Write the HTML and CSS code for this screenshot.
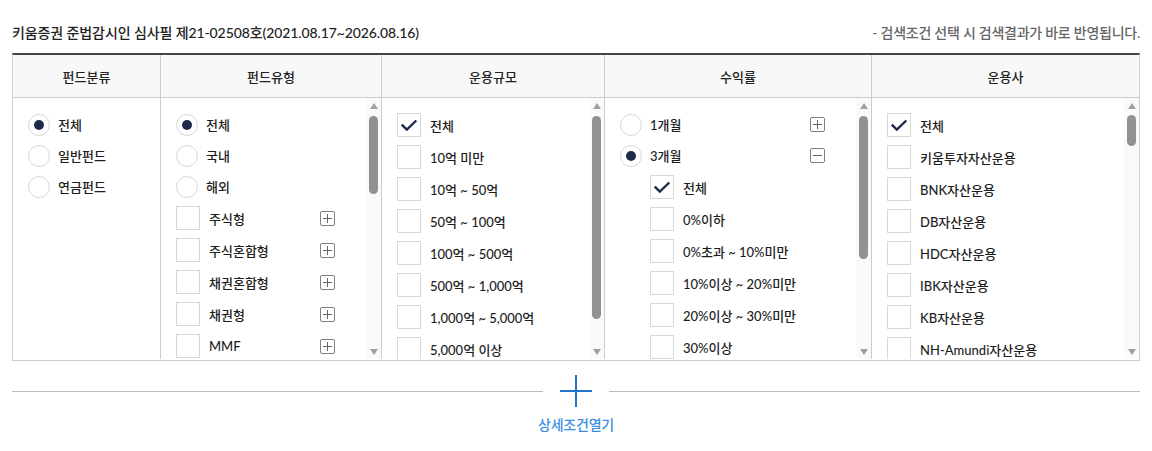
FILE: index.html
```html
<!DOCTYPE html>
<html lang="ko">
<head>
<meta charset="utf-8">
<title>펀드검색</title>
<link rel="stylesheet" href="styles.css">
</head>
<body>
<div class="page">
  <div class="topline">
    <span class="title">키움증권 준법감시인 심사필 제21-02508호(2021.08.17~2026.08.16)</span>
    <span class="note">- 검색조건 선택 시 검색결과가 바로 반영됩니다.</span>
  </div>

  <div class="filter">
    <div class="head">펀드분류</div>
    <div class="head">펀드유형</div>
    <div class="head">운용규모</div>
    <div class="head">수익률</div>
    <div class="head">운용사</div>

    <!-- 펀드분류 -->
    <div class="cell">
      <ul class="list">
        <li class="item radio-item"><span class="radio on"></span><span class="label">전체</span></li>
        <li class="item radio-item"><span class="radio"></span><span class="label">일반펀드</span></li>
        <li class="item radio-item"><span class="radio"></span><span class="label">연금펀드</span></li>
      </ul>
    </div>

    <!-- 펀드유형 -->
    <div class="cell">
      <ul class="list">
        <li class="item radio-item"><span class="radio on"></span><span class="label">전체</span></li>
        <li class="item radio-item"><span class="radio"></span><span class="label">국내</span></li>
        <li class="item radio-item"><span class="radio"></span><span class="label">해외</span></li>
        <li class="item check-item"><span class="check"></span><span class="label">주식형</span><span class="toggle plus"></span></li>
        <li class="item check-item"><span class="check"></span><span class="label">주식혼합형</span><span class="toggle plus"></span></li>
        <li class="item check-item"><span class="check"></span><span class="label">채권혼합형</span><span class="toggle plus"></span></li>
        <li class="item check-item"><span class="check"></span><span class="label">채권형</span><span class="toggle plus"></span></li>
        <li class="item check-item"><span class="check"></span><span class="label">MMF</span><span class="toggle plus"></span></li>
      </ul>
      <div class="scrollbar"><span class="arrow up"></span><span class="thumb t2"></span><span class="arrow down"></span></div>
    </div>

    <!-- 운용규모 -->
    <div class="cell">
      <ul class="list">
        <li class="item check-item"><span class="check on"><svg viewBox="0 0 24 24"><path d="M5 12.5 L9.6 17 L19 8"/></svg></span><span class="label">전체</span></li>
        <li class="item check-item"><span class="check"></span><span class="label">10억 미만</span></li>
        <li class="item check-item"><span class="check"></span><span class="label">10억 ~ 50억</span></li>
        <li class="item check-item"><span class="check"></span><span class="label">50억 ~ 100억</span></li>
        <li class="item check-item"><span class="check"></span><span class="label">100억 ~ 500억</span></li>
        <li class="item check-item"><span class="check"></span><span class="label">500억 ~ 1,000억</span></li>
        <li class="item check-item"><span class="check"></span><span class="label">1,000억 ~ 5,000억</span></li>
        <li class="item check-item"><span class="check"></span><span class="label">5,000억 이상</span></li>
      </ul>
      <div class="scrollbar"><span class="arrow up"></span><span class="thumb t3"></span><span class="arrow down"></span></div>
    </div>

    <!-- 수익률 -->
    <div class="cell">
      <ul class="list">
        <li class="item radio-item"><span class="radio"></span><span class="label">1개월</span><span class="toggle plus"></span></li>
        <li class="item radio-item"><span class="radio on"></span><span class="label">3개월</span><span class="toggle minus"></span></li>
        <li class="item check-item sub"><span class="check on"><svg viewBox="0 0 24 24"><path d="M5 12.5 L9.6 17 L19 8"/></svg></span><span class="label">전체</span></li>
        <li class="item check-item sub"><span class="check"></span><span class="label">0%이하</span></li>
        <li class="item check-item sub"><span class="check"></span><span class="label">0%초과 ~ 10%미만</span></li>
        <li class="item check-item sub"><span class="check"></span><span class="label">10%이상 ~ 20%미만</span></li>
        <li class="item check-item sub"><span class="check"></span><span class="label">20%이상 ~ 30%미만</span></li>
        <li class="item check-item sub"><span class="check"></span><span class="label">30%이상</span></li>
      </ul>
      <div class="scrollbar"><span class="arrow up"></span><span class="thumb t4"></span><span class="arrow down"></span></div>
    </div>

    <!-- 운용사 -->
    <div class="cell">
      <ul class="list">
        <li class="item check-item"><span class="check on"><svg viewBox="0 0 24 24"><path d="M5 12.5 L9.6 17 L19 8"/></svg></span><span class="label">전체</span></li>
        <li class="item check-item"><span class="check"></span><span class="label">키움투자자산운용</span></li>
        <li class="item check-item"><span class="check"></span><span class="label">BNK자산운용</span></li>
        <li class="item check-item"><span class="check"></span><span class="label">DB자산운용</span></li>
        <li class="item check-item"><span class="check"></span><span class="label">HDC자산운용</span></li>
        <li class="item check-item"><span class="check"></span><span class="label">IBK자산운용</span></li>
        <li class="item check-item"><span class="check"></span><span class="label">KB자산운용</span></li>
        <li class="item check-item"><span class="check"></span><span class="label">NH-Amundi자산운용</span></li>
      </ul>
      <div class="scrollbar"><span class="arrow up"></span><span class="thumb t5"></span><span class="arrow down"></span></div>
    </div>
  </div>

  <div class="more">
    <div class="more-line">
      <span class="rule"></span>
      <svg class="more-icon" viewBox="0 0 32 32"><path d="M16 0 V32 M0 16 H32"/></svg>
      <span class="rule"></span>
    </div>
    <div class="more-text">상세조건열기</div>
  </div>
</div>
</body>
</html>
```

FILE: styles.css
```css
* { box-sizing: border-box; }
html, body { margin: 0; padding: 0; background: #fff; }
body {
  font-family: "Lato", "Noto Sans CJK KR", sans-serif;
  color: #222;
  font-size: 13px;
  font-weight: 500;
}
.page { padding: 0 12px; }

.topline {
  display: flex;
  justify-content: space-between;
  align-items: center;
  height: 20px;
  margin-top: 22px;
  margin-bottom: 11px;
}
.title { font-size: 14px; letter-spacing: -0.1px; color: #222; }
.note { font-size: 14px; letter-spacing: -0.25px; color: #666; }

.filter {
  display: grid;
  grid-template-columns: 147px 221px 223px 267px 1fr;
  grid-template-rows: 43px 262px;
  border-top: 2px solid #444;
  border-left: 1px solid #ccc;
  border-right: 1px solid #ccc;
  border-bottom: 1px solid #ccc;
}
.head {
  display: flex;
  align-items: center;
  justify-content: center;
  background: #f8f8f8;
  border-bottom: 1px solid #ccc;
  font-size: 13px;
  color: #222;
}
.head + .head, .cell + .cell { border-left: 1px solid #ccc; }
.cell {
  display: flex;
  overflow: hidden;
  height: 261px;
}
.list {
  list-style: none;
  margin: 0;
  padding: 11px 31px 0 15px;
  flex: 1;
  min-width: 0;
}
.item {
  display: flex;
  align-items: center;
  white-space: nowrap;
}
.radio-item { height: 31px; }
.check-item { height: 32px; }
.item.sub { padding-left: 30px; }
.label { margin-left: 9px; flex: 1; color: #1e1e1e; }
.radio-item .label { margin-left: 8px; }

.radio {
  width: 22px; height: 22px;
  border: 1px solid #d8d8d8;
  border-radius: 50%;
  display: flex; align-items: center; justify-content: center;
  flex: none;
  background: #fff;
}
.radio.on::after {
  content: "";
  width: 10px; height: 10px;
  border-radius: 50%;
  background: #1b2b49;
}
.check {
  width: 24px; height: 24px;
  border: 1px solid #d8d8d8;
  flex: none;
  background: #fff;
  display: flex;
}
.check svg { width: 22px; height: 22px; }
.check svg path { fill: none; stroke: #1b2b49; stroke-width: 2.6; stroke-linecap: square; stroke-linejoin: miter; }

.toggle {
  width: 15px; height: 15px;
  border: 1px solid #808080;
  border-radius: 2px;
  position: relative;
  flex: none;
}
.toggle::before {
  content: "";
  position: absolute;
  left: 2px; right: 2px; top: 6px;
  height: 1px;
  background: #666;
}
.plus::after {
  content: "";
  position: absolute;
  top: 2px; bottom: 2px; left: 6px;
  width: 1px;
  background: #666;
}

.scrollbar {
  width: 15px;
  flex: none;
  background: #fafafa;
  display: flex;
  flex-direction: column;
  align-items: center;
  padding: 5px 0 4px;
}
.arrow { width: 0; height: 0; border-left: 4.5px solid transparent; border-right: 4.5px solid transparent; }
.arrow.up { border-bottom: 6px solid #a0a0a0; }
.arrow.down { border-top: 6px solid #a0a0a0; margin-top: auto; }
.thumb {
  width: 9px;
  border-radius: 5px;
  background: #919191;
  margin-top: 7px;
}
.t2 { height: 78px; }
.t3 { height: 203px; }
.t4 { height: 143px; }
.t5 { height: 31px; margin-top: 6px; }

.more { display: flex; flex-direction: column; align-items: center; }
.more-line {
  display: flex;
  align-items: center;
  width: 100%;
  margin-top: 14px;
  gap: 17px;
}
.rule { flex: 1; height: 1px; background: #bdbdbd; }
.more-icon { width: 32px; height: 32px; flex: none; }
.more-icon path { stroke: #1f76cf; stroke-width: 2; fill: none; }
.more-text {
  margin-top: 7px;
  color: #3b8fe3;
  font-size: 14px;
  letter-spacing: -0.2px;
}
```
